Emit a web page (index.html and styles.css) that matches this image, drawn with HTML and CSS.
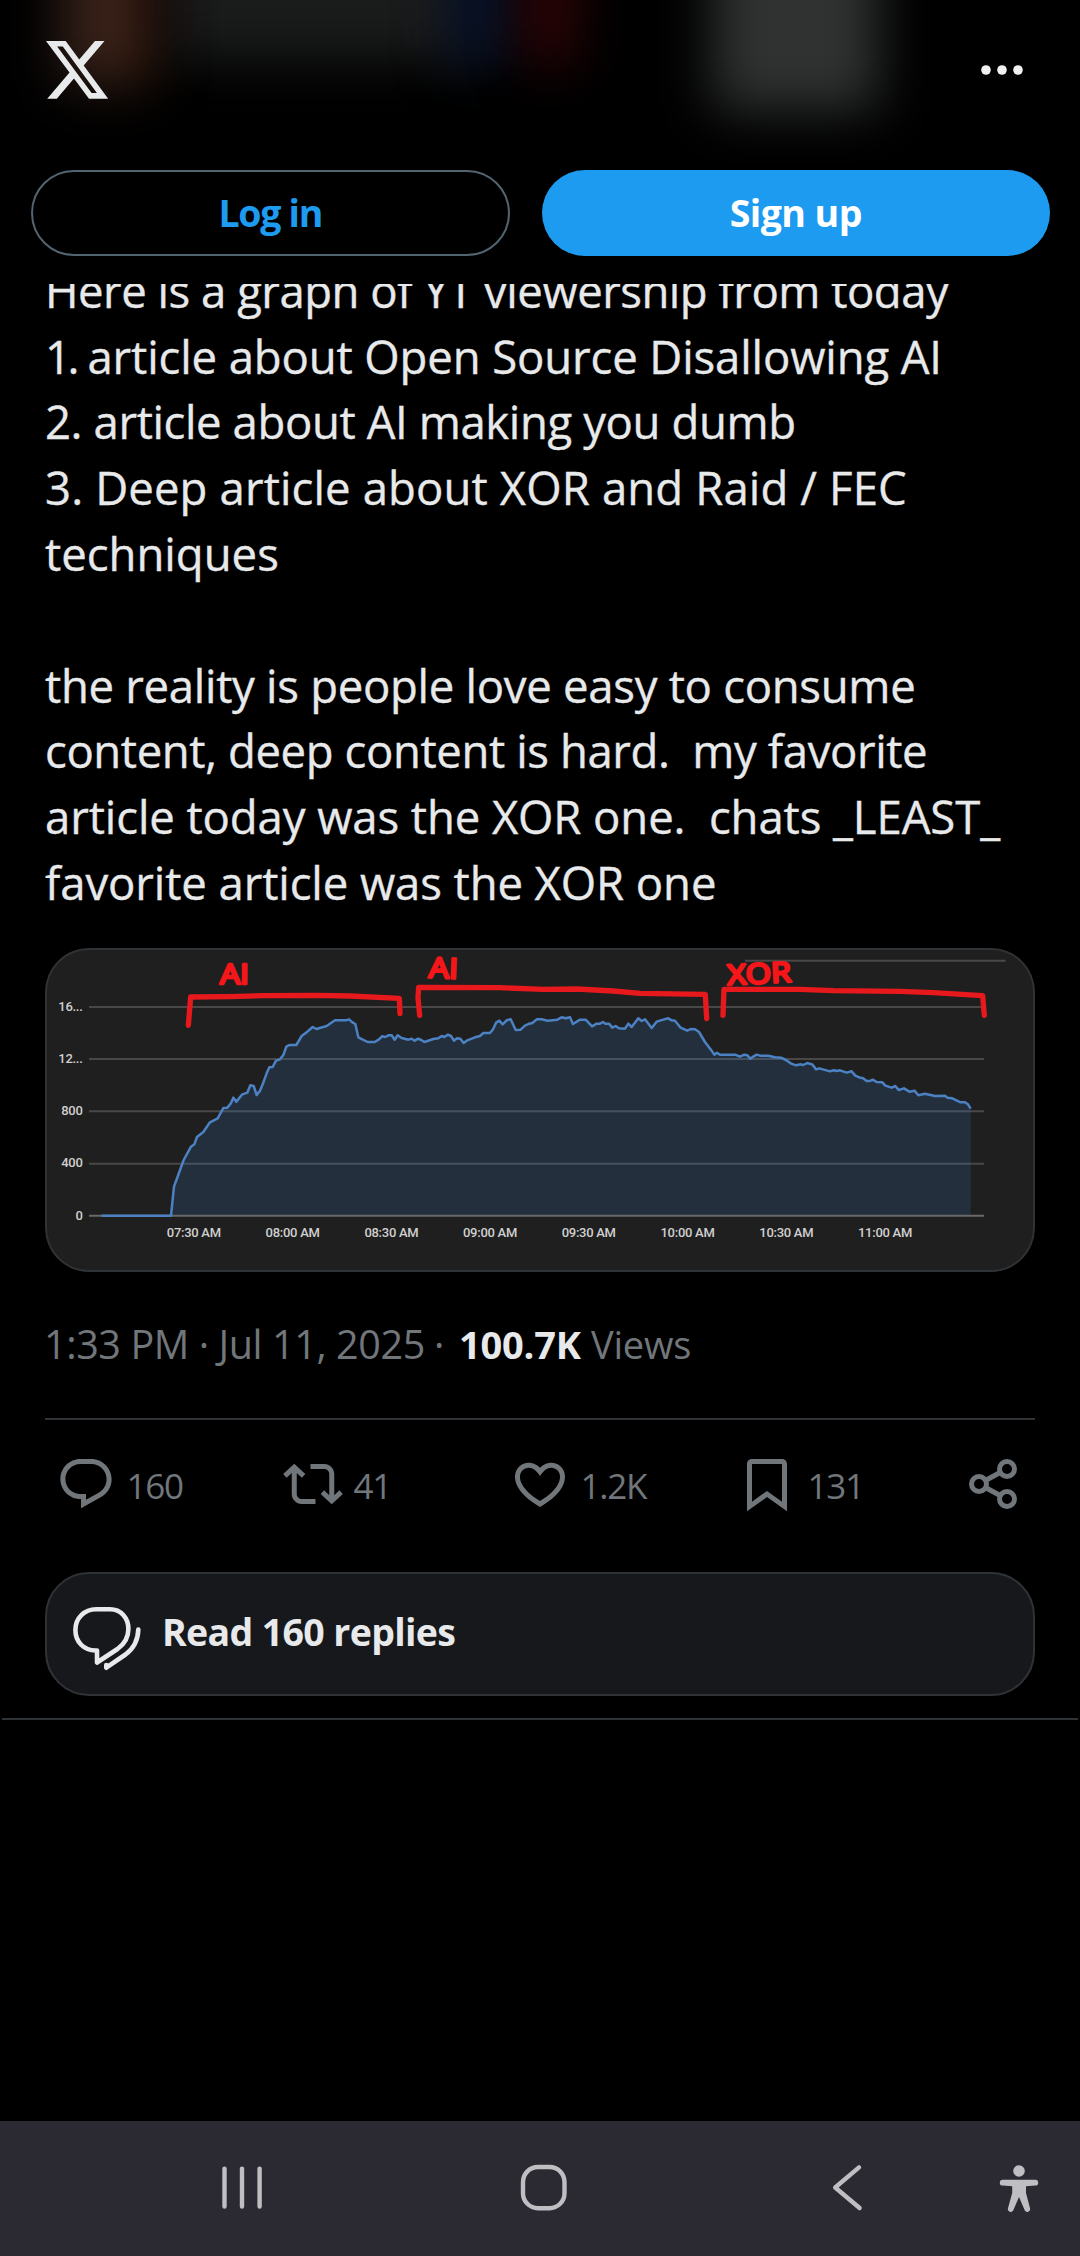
FILE: index.html
```html
<!DOCTYPE html>
<html lang="en">
<head>
<meta charset="utf-8">
<title>Post on X</title>
<link rel="stylesheet" href="styles.css">
</head>
<body>
<div class="screen">
  <header class="header">
    <div class="glow glow-grey"></div>
    <div class="glow glow-brown"></div>
    <div class="glow glow-blue"></div>
    <div class="glow glow-red"></div>
    <div class="glow glow-light"></div>
    <div class="header-top">
      <svg class="logo" viewBox="1.254 2.25 21.573 19.5" preserveAspectRatio="none" aria-label="X"><path d="M18.244 2.25h3.308l-7.227 8.26 8.502 11.24H16.17l-5.214-6.817L4.99 21.75H1.68l7.73-8.835L1.254 2.25H8.08l4.713 6.231zm-1.161 17.52h1.833L7.084 4.126H5.117z"/></svg>
      <svg class="more" viewBox="0 0 42 12"><circle cx="5" cy="6" r="4.8"/><circle cx="21" cy="6" r="4.8"/><circle cx="37" cy="6" r="4.8"/></svg>
    </div>
    <div class="auth">
      <a class="btn btn-login">Log in</a>
      <a class="btn btn-signup">Sign up</a>
    </div>
  </header>

  <main class="main">
    <article class="post">
      <div class="body">
        <p class="line tighter">Here is a graph of YT viewership from today</p>
        <p class="line wide"><span class="num">1.</span> article about Open Source Disallowing AI</p>
        <p class="line tight">2. article about AI making you dumb</p>
        <p class="line loose">3. Deep article about XOR and Raid / FEC</p>
        <p class="line normal">techniques</p>
        <p class="line"> </p>
        <p class="line">the reality is people love easy to consume</p>
        <p class="line tight">content, deep content is hard.  my favorite</p>
        <p class="line snug">article today was the XOR one.  chats _LEAST_</p>
        <p class="line snug">favorite article was the XOR one</p>
      </div>

      <figure class="chart">
        <svg viewBox="45 948 990 324">
          <g class="grid">
            <path d="M745 960.8H1005.5M89 1007H984M89 1059H984M89 1111.3H984M89 1163.7H984"/>
          </g>
          <g transform="translate(30 930) scale(.33333)">
            <path class="area" d="M423 857 432 770 461 690 483 650 493 643 501 621 520 606 540 577 563 565 580 534 592 533 602 521 610 503 619 515 637 493 652 488 661 466 671 468 680 495 690 482 698 463 710 430 718 412 728 411 738 392 750 388 760 375 769 350 778 345 799 345 815 318 832 305 848 291 859 297 890 288 915 271 948 271 957 268 967 277 976 282 985 322 997 328 1013 336 1034 336 1047 328 1056 319 1066 321 1075 316 1085 316 1094 329 1103 316 1115 324 1135 329 1145 326 1154 332 1164 326 1174 330 1183 336 1210 327 1225 325 1235 318 1243 321 1254 314 1263 318 1272 332 1281 325 1291 326 1301 339 1310 332 1335 322 1350 318 1360 309 1380 309 1389 298 1399 277 1408 272 1418 283 1430 271 1442 268 1457 300 1472 299 1485 287 1495 282 1507 279 1520 268 1535 268 1553 272 1582 269 1595 262 1607 265 1620 262 1629 282 1650 269 1667 269 1686 289 1700 281 1710 281 1719 276 1726 281 1737 281 1747 293 1757 288 1767 295 1785 296 1795 281 1805 291 1825 265 1835 273 1845 268 1865 294 1880 275 1900 269 1915 265 1925 271 1935 272 1952 293 1972 302 1982 297 1995 298 2007 306 2025 336 2045 362 2053 374 2061 368 2070 374 2115 374 2130 380 2143 374 2152 376 2161 386 2171 379 2180 374 2190 377 2215 377 2235 382 2253 383 2268 390 2282 400 2298 406 2313 403 2320 405 2332 399 2348 404 2358 418 2368 415 2400 424 2412 421 2420 423 2430 421 2450 428 2465 424 2476 437 2490 443 2498 444 2510 453 2520 453 2528 449 2540 456 2557 457 2566 467 2585 473 2596 468 2606 480 2622 475 2638 485 2654 482 2665 496 2685 491 2715 498 2745 497 2752 503 2767 505 2792 517 2805 517 2814 523 2822 536V857Z"/>
            <path class="axis" d="M177 857H2862"/>
            <path class="series" d="M215 857H423L432 770 461 690 483 650 493 643 501 621 520 606 540 577 563 565 580 534 592 533 602 521 610 503 619 515 637 493 652 488 661 466 671 468 680 495 690 482 698 463 710 430 718 412 728 411 738 392 750 388 760 375 769 350 778 345 799 345 815 318 832 305 848 291 859 297 890 288 915 271 948 271 957 268 967 277 976 282 985 322 997 328 1013 336 1034 336 1047 328 1056 319 1066 321 1075 316 1085 316 1094 329 1103 316 1115 324 1135 329 1145 326 1154 332 1164 326 1174 330 1183 336 1210 327 1225 325 1235 318 1243 321 1254 314 1263 318 1272 332 1281 325 1291 326 1301 339 1310 332 1335 322 1350 318 1360 309 1380 309 1389 298 1399 277 1408 272 1418 283 1430 271 1442 268 1457 300 1472 299 1485 287 1495 282 1507 279 1520 268 1535 268 1553 272 1582 269 1595 262 1607 265 1620 262 1629 282 1650 269 1667 269 1686 289 1700 281 1710 281 1719 276 1726 281 1737 281 1747 293 1757 288 1767 295 1785 296 1795 281 1805 291 1825 265 1835 273 1845 268 1865 294 1880 275 1900 269 1915 265 1925 271 1935 272 1952 293 1972 302 1982 297 1995 298 2007 306 2025 336 2045 362 2053 374 2061 368 2070 374 2115 374 2130 380 2143 374 2152 376 2161 386 2171 379 2180 374 2190 377 2215 377 2235 382 2253 383 2268 390 2282 400 2298 406 2313 403 2320 405 2332 399 2348 404 2358 418 2368 415 2400 424 2412 421 2420 423 2430 421 2450 428 2465 424 2476 437 2490 443 2498 444 2510 453 2520 453 2528 449 2540 456 2557 457 2566 467 2585 473 2596 468 2606 480 2622 475 2638 485 2654 482 2665 496 2685 491 2715 498 2745 497 2752 503 2767 505 2792 517 2805 517 2814 523 2822 536"/>
            <g class="bracket">
              <path d="M475 286 482 201 600 200 700 197 860 196 960 198 1108 205 1110 251"/>
              <path d="M1169 256 1164 203 1166 172 1410 173 1540 178 1640 177 1750 183 1830 190 2026 193 2030 266"/>
              <path d="M2079 256 2082 178 2310 178 2410 182 2610 184 2710 188 2858 197 2863 256"/>
            </g>
          </g>
          <g class="note">
            <text x="220" y="984" textLength="29" lengthAdjust="spacingAndGlyphs">AI</text>
            <text x="429" y="978" textLength="29" lengthAdjust="spacingAndGlyphs" transform="rotate(2 442 967)">AI</text>
            <text x="727" y="983.5" textLength="64" lengthAdjust="spacingAndGlyphs" transform="rotate(-3 758 972)">XOR</text>
          </g>
          <g class="ylabel">
            <text x="82.5" y="1010.5">16...</text>
            <text x="82.5" y="1062.6">12...</text>
            <text x="82.5" y="1115">800</text>
            <text x="82.5" y="1167.3">400</text>
            <text x="82.5" y="1219.7">0</text>
          </g>
          <g class="xlabel">
            <text x="193.8" y="1236.7">07:30 AM</text>
            <text x="292.6" y="1236.7">08:00 AM</text>
            <text x="391.4" y="1236.7">08:30 AM</text>
            <text x="490" y="1236.7">09:00 AM</text>
            <text x="588.7" y="1236.7">09:30 AM</text>
            <text x="687.5" y="1236.7">10:00 AM</text>
            <text x="786.3" y="1236.7">10:30 AM</text>
            <text x="885" y="1236.7">11:00 AM</text>
          </g>
        </svg>
      </figure>

      <div class="meta"><span class="date">1:33 PM · Jul 11, 2025</span><span class="dot">·</span><b class="count">100.7K</b><span class="views">Views</span></div>

      <div class="actions">
        <div class="action"><svg viewBox="0 0 24 24"><path d="M1.751 10c0-4.42 3.584-8 8.005-8h4.366c4.49 0 8.129 3.64 8.129 8.13 0 2.96-1.607 5.68-4.196 7.11l-8.054 4.46v-3.69h-.067c-4.49.1-8.183-3.51-8.183-8.01zm8.005-6c-3.317 0-6.005 2.69-6.005 6 0 3.37 2.77 6.08 6.138 6.01l.351-.01h1.761v2.3l5.087-2.81c1.951-1.08 3.163-3.13 3.163-5.36 0-3.39-2.744-6.13-6.129-6.13H9.756z"/></svg><span>160</span></div>
        <div class="action"><svg viewBox="0 0 24 24"><path d="M4.5 3.88l4.432 4.14-1.364 1.46L5.5 7.55V16c0 1.1.896 2 2 2H13v2H7.5c-2.209 0-4-1.79-4-4V7.55L1.432 9.48.068 8.02 4.5 3.88zM16.5 6H11V4h5.5c2.209 0 4 1.79 4 4v8.45l2.068-1.93 1.364 1.46-4.432 4.14-4.432-4.14 1.364-1.46 2.068 1.93V8c0-1.1-.896-2-2-2z"/></svg><span>41</span></div>
        <div class="action"><svg viewBox="0 0 24 24"><path d="M16.697 5.5c-1.222-.06-2.679.51-3.89 2.16l-.805 1.09-.806-1.09C9.984 6.01 8.526 5.44 7.304 5.5c-1.243.07-2.349.78-2.91 1.91-.552 1.12-.633 2.78.479 4.82 1.074 1.97 3.257 4.27 7.129 6.61 3.87-2.34 6.052-4.64 7.126-6.61 1.111-2.04 1.03-3.7.477-4.82-.561-1.13-1.666-1.84-2.908-1.91zm4.187 7.69c-1.351 2.48-4.001 5.12-8.379 7.67l-.503.3-.504-.3c-4.379-2.55-7.029-5.19-8.382-7.67-1.36-2.5-1.41-4.86-.514-6.67.887-1.79 2.647-2.91 4.601-3.01 1.651-.09 3.368.56 4.798 2.01 1.429-1.45 3.146-2.1 4.796-2.01 1.954.1 3.714 1.22 4.601 3.01.896 1.81.846 4.17-.514 6.67z"/></svg><span>1.2K</span></div>
        <div class="action"><svg viewBox="0 0 24 24"><path d="M4 4.2C4 2.9 4.7 2 6 2h12c1.3 0 2 .9 2 2.2v18.74l-8-5.71-8 5.71V4.2zM6 4v15.06l6-4.29 6 4.29V4z"/></svg><span>131</span></div>
        <div class="action"><svg class="share" viewBox="0 0 24 24"><circle cx="6" cy="12" r="3"/><circle cx="17.2" cy="6" r="3"/><circle cx="17.2" cy="18" r="3"/><path d="M8.6 10.6l6-3.3M8.6 13.4l6 3.3"/></svg></div>
      </div>

      <a class="replies">
        <svg viewBox="70 1604 73 70"><path d="M96 1609.3H110C121 1609.3 128.4 1618 128.4 1629C128.4 1637 124.5 1644 117.5 1649L97 1662.5V1650.5H95.5C84 1650.5 75.4 1642 75.4 1630C75.4 1618 84.5 1609.3 96 1609.3ZM138.3 1629.5C138 1641 133 1649 125.5 1654.5L106.3 1667.7V1665"/></svg>
        <span>Read 160 replies</span>
      </a>
    </article>
    <hr class="divider">
  </main>

  <nav class="navbar">
    <svg viewBox="0 0 48 48"><path d="M6.5 4.6V42.6M24 4.6V42.6M41.6 4.6V42.6"/></svg>
    <svg viewBox="0 0 48 48"><rect x="3" y="3" width="41.5" height="41.2" rx="15"/></svg>
    <svg viewBox="0 0 48 48"><path d="M36 3.4 12.2 23.5 36.6 44"/></svg>
    <svg class="a11y" viewBox="0 0 48 48"><circle cx="24" cy="7" r="5.8"/><path d="M7.7 15.8H40.3A2.9 2.9 0 0 1 40.3 21.6L31 22.3V29L35.1 44.6A2.9 2.9 0 0 1 29.8 46.6L24 33 18.2 46.6A2.9 2.9 0 0 1 12.9 44.6L17.2 29V22.3L7.7 21.6A2.9 2.9 0 0 1 7.7 15.8Z"/></svg>
  </nav>
</div>
</body>
</html>
```
FILE: styles.css
```css
* { box-sizing: border-box; margin: 0; padding: 0; }
body { background: #000; color: #e7e9ea; font-family: "Open Sans", "Noto Sans", sans-serif; }
.screen { width: 1080px; height: 2256px; display: flex; flex-direction: column; overflow: hidden; }

.header { flex: none; height: 284px; position: relative; overflow: hidden; background: #000; }
.glow { position: absolute; top: -80px; height: 130px; filter: blur(26px); }
.glow-grey { left: 170px; width: 310px; height: 140px; background: #1a1b1b; }
.glow-brown { left: 62px; width: 90px; height: 165px; background: linear-gradient(90deg, #35241f, #3d1e10); }
.glow-blue { left: 450px; width: 60px; height: 145px; background: #07122a; }
.glow-red { left: 525px; width: 50px; height: 145px; background: #330507; }
.glow-light { left: 713px; width: 165px; height: 190px; background: #303232; }
.header-top { position: relative; height: 170px; padding: 41px 57px 0 46px; display: flex; justify-content: space-between; }
.logo { width: 62.2px; height: 57.8px; fill: #e7e9ea; }
.more { width: 42px; height: 12px; margin-top: 23px; fill: #f0f1f2; }
.auth { position: relative; display: flex; gap: 32.5px; padding-left: 31px; }
.btn { height: 86px; border-radius: 43px; font-size: 37.5px; font-weight: 700; text-align: center; }
.btn-login { width: 478.5px; border: 2px solid #536471; line-height: 81px; color: #1d9bf0; letter-spacing: -1.3px; }
.btn-signup { width: 507.5px; line-height: 85px; background: #1d9bf0; color: #fff; letter-spacing: -.55px; }

/* Post */
.main { flex: 1; min-height: 0; overflow: hidden; }
.post { height: 1434px; padding: 0 45px; }
.post::before { content: ""; display: table; }
.divider { height: 2px; margin: 0 2px; border: 0; background: #2f3336; }
.body { margin-top: -26.2px; }
.line { height: 65.8px; font-size: 45.5px; line-height: 65.8px; letter-spacing: -.3px; white-space: pre; -webkit-text-stroke: .35px currentColor; }
.tight { letter-spacing: -.4px; }
.tighter { letter-spacing: -.5px; }
.snug { letter-spacing: -.1px; }
.normal { letter-spacing: 0; }
.wide { letter-spacing: -.13px; }
.loose { letter-spacing: .12px; }
.num { letter-spacing: -3.6px; }

/* Viewership chart */
.chart { height: 324px; margin-top: 32.2px; border-radius: 44px; background: #1f1f1f; overflow: hidden; position: relative; }
.chart::after { content: ""; position: absolute; inset: 0; border: 2px solid #2f3336; border-radius: 44px; }
.chart svg { display: block; width: 990px; height: 324px; }
.grid path { stroke: #484848; stroke-width: 2; }
.axis { stroke: #6a6a6a; stroke-width: 6; }
.area { fill: rgba(62, 130, 210, .17); }
.series { fill: none; stroke: #4c82c4; stroke-width: 7.5; stroke-linejoin: round; }
.bracket path { fill: none; stroke: #e8191c; stroke-width: 16; stroke-linecap: round; stroke-linejoin: round; }
.note text { font: 500 28px "Open Sans", sans-serif; fill: #f5161a; stroke: #f5161a; stroke-width: 2.6; stroke-linejoin: round; }
.ylabel text, .xlabel text { font: 500 13px Roboto, sans-serif; fill: #d0d0d0; letter-spacing: -.28px; }
.ylabel text { text-anchor: end; }
.xlabel text { text-anchor: middle; }

/* Date and views */
.meta { height: 60px; margin-top: 42px; display: flex; align-items: baseline; white-space: pre; color: #71767b; font-size: 39.5px; line-height: 60px; }
.date { width: 390px; margin-left: -1px; letter-spacing: -.4px; }
.dot { width: 25px; }
.count { width: 132px; font-size: 38px; letter-spacing: -.2px; color: #e7e9ea; }
.views { font-size: 38px; letter-spacing: -.2px; }

/* Action row */
.actions { height: 96px; margin-top: 44px; padding: 34px 0 0 10.5px; border-top: 2px solid #2f3336; display: grid; grid-template-columns: repeat(4, 227px) 60px; color: #71767b; }
.action { display: flex; gap: 11px; height: 60px; }
.action svg { flex: none; width: 60px; height: 60px; fill: #71767b; }
.action .share { fill: none; stroke: #71767b; stroke-width: 2; }
.action span { padding-top: 2.5px; font-size: 35px; line-height: 60px; letter-spacing: -1.2px; }

.replies { height: 124px; margin-top: 58px; padding-left: 23px; display: flex; align-items: center; gap: 19px; border: 2px solid #2f3336; border-radius: 44px; background: #16181c; }
.replies svg { width: 73px; height: 70px; margin-top: 10px; fill: none; stroke: #e7e9ea; stroke-width: 4.6; stroke-linecap: round; stroke-linejoin: round; }
.replies span { margin-top: -3px; font-size: 37.5px; font-weight: 700; line-height: 60px; letter-spacing: -.65px; }

/* System navigation */
.navbar { flex: none; height: 135px; padding-left: 90.7px; display: grid; grid-template-columns: 302.4px 302.4px 302.4px 41.6px; align-items: center; justify-items: center; background: #2b2a33; }
.navbar svg { width: 48px; height: 48px; margin-top: -1px; fill: none; stroke: #bfbec2; stroke-width: 4.4; stroke-linecap: round; stroke-linejoin: round; }
.navbar .a11y { fill: #bfbec2; stroke: none; }
```
